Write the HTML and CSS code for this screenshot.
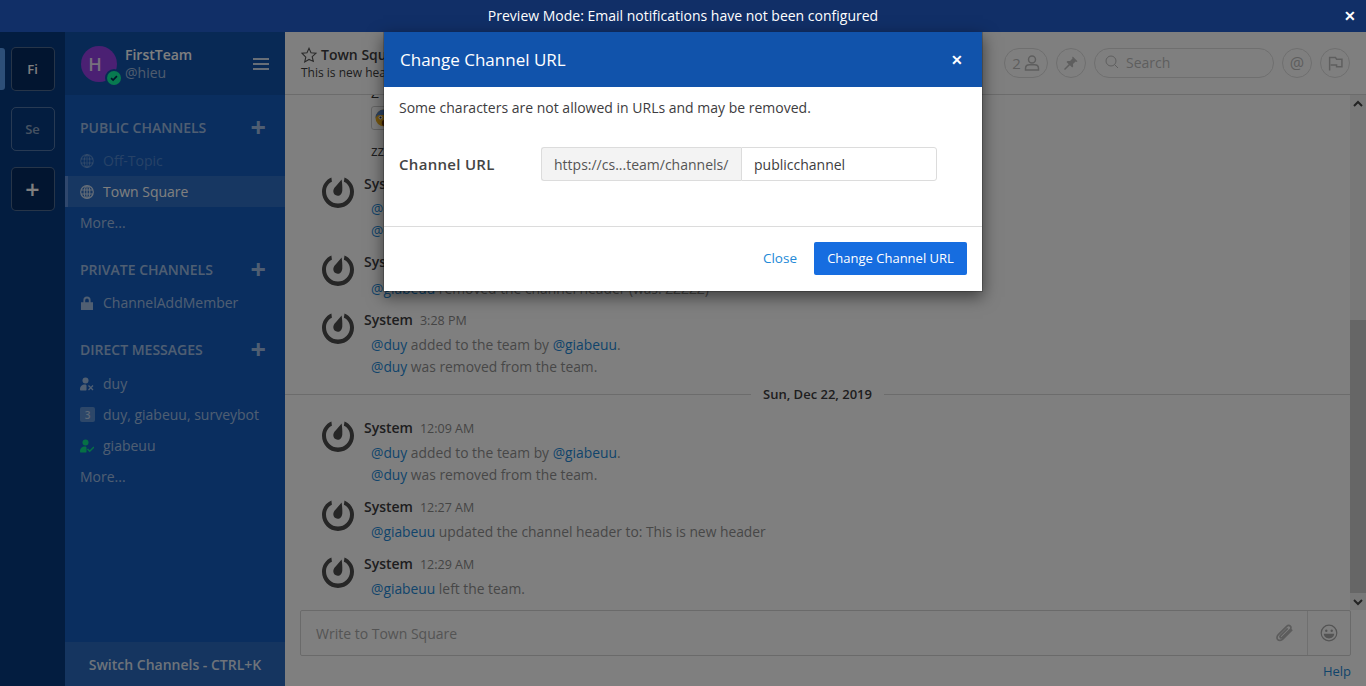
FILE: index.html
```html
<!DOCTYPE html>
<html lang="en">
<head>
  <meta charset="UTF-8" />
  <title>Town Square - FirstTeam</title>
  <link rel="stylesheet" href="styles.css">
</head>
<body>

  <!-- Announcement bar -->
  <div class="announcement">
    <span>Preview Mode: Email notifications have not been configured</span>
    <span class="announcement-close">&#10005;</span>
  </div>

  <div class="page">
    <!-- Team sidebar -->
    <div class="teams">
      <div class="team-row">
        <span class="team-marker"></span>
        <div class="team-btn team-active">Fi</div>
      </div>
      <div class="team-row"><div class="team-btn team-muted">Se</div></div>
      <div class="team-row"><div class="team-btn team-add">+</div></div>
    </div>

    <!-- Channel sidebar -->
    <div class="sidebar">
      <div class="sidebar-head">
        <div class="avatar">H
          <span class="avatar-status">
            <svg viewBox="0 0 12 12" width="10" height="10"><path d="M2.5 6.2l2.4 2.4 4.6-4.8" fill="none" stroke="#062a55" stroke-width="2"/></svg>
          </span>
        </div>
        <div class="head-names">
          <div class="head-team">FirstTeam</div>
          <div class="head-user">@hieu</div>
        </div>
        <div class="burger"><i></i><i></i><i></i></div>
      </div>

      <div class="sidebar-list">
        <div class="section-title">PUBLIC CHANNELS<span class="section-plus">+</span></div>
        <div class="channel channel-faded">
          <svg class="channel-icon" viewBox="0 0 14 14"><use href="#globe"/></svg>Off-Topic
        </div>
        <div class="channel channel-active">
          <svg class="channel-icon" viewBox="0 0 14 14"><use href="#globe"/></svg>Town Square
        </div>
        <div class="channel-more">More...</div>

        <div class="section-title section-gap">PRIVATE CHANNELS<span class="section-plus">+</span></div>
        <div class="channel">
          <svg class="channel-icon" viewBox="0 0 14 14"><path d="M1 6.2h12V14H1zM3.4 6.5V4.2a3.6 3.6 0 0 1 7.2 0v2.300h-1.800V4.300a1.800 1.800 0 0 0-3.600 0v2.200z" fill="currentColor"/></svg>ChannelAddMember
        </div>

        <div class="section-title section-gap section-dm">DIRECT MESSAGES<span class="section-plus">+</span></div>
        <div class="channel">
          <svg class="channel-icon" viewBox="0 0 14 14"><circle cx="5.500" cy="3.500" r="3" fill="currentColor"/><path d="M0 12.500C0 9 2 7.500 5 7.500c1 0 1.500.5 1.500 1.500v3.500c0 1-.5 1-1.500 1H1c-.7 0-1-.3-1-1z" fill="currentColor"/><path d="M8.500 8.500l4.500 4.500M13 8.500l-4.500 4.500" stroke="currentColor" stroke-width="1.300"/></svg>duy
        </div>
        <div class="channel">
          <span class="group-count">3</span>duy, giabeuu, surveybot
        </div>
        <div class="channel">
          <svg class="channel-icon icon-online" viewBox="0 0 14 14"><circle cx="5.500" cy="3.500" r="3" fill="currentColor"/><path d="M0 12.500C0 9 2 7.500 5 7.500c1 0 1.500.5 1.500 1.500v3.500c0 1-.5 1-1.500 1H1c-.7 0-1-.3-1-1z" fill="currentColor"/><path d="M7.500 10l2.200 2.200L14 8" fill="none" stroke="currentColor" stroke-width="1.500"/></svg>giabeuu
        </div>
        <div class="channel-more">More...</div>
      </div>

      <div class="switcher">Switch Channels - CTRL+K</div>
    </div>

    <!-- Center channel -->
    <div class="center">
      <div class="channel-header">
        <div class="header-info">
          <div class="header-name">
            <svg class="star" viewBox="0 0 16 16" width="16" height="16"><path d="M8 1.300l2 4.500 4.900.5-3.700 3.300 1.100 4.800L8 12.400l-4.300 2.500 1.100-4.800L1.100 6.300 6 5.800z" fill="none" stroke="#555" stroke-width="1.100"/></svg>
            Town Square
          </div>
          <div class="header-desc">This is new header</div>
        </div>
        <div class="header-tools">
          <div class="tool-pill tool-members">2
            <svg viewBox="0 0 16 16" width="16" height="16"><circle cx="8" cy="4.500" r="3.500" fill="none" stroke="currentColor" stroke-width="1.500"/><path d="M1.500 15v-1.500C1.500 11 3.500 9.800 5.500 9.800h5c2 0 4 1.200 4 3.700V15z" fill="none" stroke="currentColor" stroke-width="1.500"/></svg>
          </div>
          <div class="tool-round">
            <svg viewBox="0 0 16 16" width="16" height="16"><path d="M9.800 1.500l4.700 4.700-1 .7-.9-.3-2.600 2.500.2 2.500-1 1-2.300-2.300L2 15l-1-.9 4.700-4.900-2.200-2.300 1-1 2.500.2 2.500-2.600-.3-.9z" fill="currentColor"/></svg>
          </div>
          <div class="search-pill">
            <svg viewBox="0 0 14 14" width="14" height="14"><circle cx="6" cy="6" r="5" fill="none" stroke="currentColor" stroke-width="1"/><path d="M9.500 9.500l3.500 3.500" stroke="currentColor" stroke-width="1"/></svg>
            <span>Search</span>
          </div>
          <div class="tool-round tool-at">@</div>
          <div class="tool-round tool-flag">
            <svg viewBox="0 0 14 14" width="15" height="15"><path d="M1.500 13.500V1.500H7L8 3h5v7H8V8.500H2.500" fill="none" stroke="currentColor" stroke-width="1.400"/></svg>
          </div>
        </div>
      </div>

      <div class="post-area">
        <div class="posts">
          <div class="old-lines">
            <div class="old-z">Z</div>
            <div class="old-thumb">
              <svg viewBox="0 0 18 18" width="18" height="18"><circle cx="9" cy="9" r="8.500" fill="#f0b020"/><path d="M.5 9a8.500 8.500 0 0 1 17 0c-1-2-3-3-3-3H3.500S1.500 7 .5 9z" fill="#5a86c8"/><circle cx="5.500" cy="8.500" r="2" fill="#fff"/><circle cx="12.500" cy="8.500" r="2" fill="#fff"/><circle cx="5.500" cy="8.500" r="1" fill="#333"/><circle cx="12.500" cy="8.500" r="1" fill="#333"/><ellipse cx="9" cy="14" rx="2.200" ry="3" fill="#7a3a10"/></svg>
            </div>
            <div class="old-zz">zzzzz</div>
          </div>

          <div class="post post-first">
            <svg class="post-logo" viewBox="0 0 32 32"><use href="#mm-logo"/></svg>
            <div class="post-body">
              <div class="post-meta"><b>System</b><time>3:28 PM</time></div>
              <p><a>@duy</a> added to the team by <a>@giabeuu</a>.</p>
              <p><a>@duy</a> was removed from the team.</p>
            </div>
          </div>
          <div class="post post-tall">
            <svg class="post-logo" viewBox="0 0 32 32"><use href="#mm-logo"/></svg>
            <div class="post-body">
              <div class="post-meta"><b>System</b><time>3:28 PM</time></div>
              <p><a>@giabeuu</a> removed the channel header (was: ZZZZZ)</p>
            </div>
          </div>
          <div class="post">
            <svg class="post-logo" viewBox="0 0 32 32"><use href="#mm-logo"/></svg>
            <div class="post-body">
              <div class="post-meta"><b>System</b><time>3:28 PM</time></div>
              <p><a>@duy</a> added to the team by <a>@giabeuu</a>.</p>
              <p><a>@duy</a> was removed from the team.</p>
            </div>
          </div>

          <div class="date-line"><span>Sun, Dec 22, 2019</span></div>

          <div class="post">
            <svg class="post-logo" viewBox="0 0 32 32"><use href="#mm-logo"/></svg>
            <div class="post-body">
              <div class="post-meta"><b>System</b><time>12:09 AM</time></div>
              <p><a>@duy</a> added to the team by <a>@giabeuu</a>.</p>
              <p><a>@duy</a> was removed from the team.</p>
            </div>
          </div>
          <div class="post">
            <svg class="post-logo" viewBox="0 0 32 32"><use href="#mm-logo"/></svg>
            <div class="post-body">
              <div class="post-meta"><b>System</b><time>12:27 AM</time></div>
              <p><a>@giabeuu</a> updated the channel header to: This is new header</p>
            </div>
          </div>
          <div class="post">
            <svg class="post-logo" viewBox="0 0 32 32"><use href="#mm-logo"/></svg>
            <div class="post-body">
              <div class="post-meta"><b>System</b><time>12:29 AM</time></div>
              <p><a>@giabeuu</a> left the team.</p>
            </div>
          </div>
        </div>

        <div class="scrollbar">
          <div class="scroll-btn">
            <svg viewBox="0 0 10 8" width="10" height="8"><path d="M1 6l4-4 4 4" fill="none" stroke="#444" stroke-width="2"/></svg>
          </div>
          <div class="scroll-track"><div class="scroll-thumb"></div></div>
          <div class="scroll-btn">
            <svg viewBox="0 0 10 8" width="10" height="8"><path d="M1 2l4 4 4-4" fill="none" stroke="#444" stroke-width="2"/></svg>
          </div>
        </div>
      </div>

      <div class="composer">
        <div class="composer-box">
          <div class="composer-input">Write to Town Square</div>
          <svg class="clip" viewBox="0 0 18 18" width="20" height="20"><path d="M15.500 6L7 14.500c-1.500 1.500-3.500 1.500-4.500.5s-1-3 .5-4.500L10.500 3c1-1 2.500-1 3.300-.2s.8 2.200-.2 3.200L6.500 13c-.5.500-1.300.5-1.700.1s-.4-1.200.1-1.700l6.500-6.500" fill="none" stroke="currentColor" stroke-width="1.500"/></svg>
          <div class="composer-emoji">
            <svg viewBox="0 0 18 18" width="18" height="18"><circle cx="9" cy="9" r="7.800" fill="none" stroke="currentColor" stroke-width="1.200"/><circle cx="6.300" cy="6.800" r="1.200" fill="currentColor"/><circle cx="11.700" cy="6.800" r="1.200" fill="currentColor"/><path d="M3.800 9.800h10.400c0 2.600-2.300 4.700-5.200 4.700s-5.200-2.100-5.200-4.700z" fill="currentColor"/></svg>
          </div>
        </div>
        <div class="composer-help"><a>Help</a></div>
      </div>
    </div>

    <!-- Dimmed backdrop and modal -->
    <div class="backdrop">
      <div class="modal">
        <div class="modal-head">
          <span>Change Channel URL</span>
          <span class="modal-x">&#10005;</span>
        </div>
        <div class="modal-body">
          <p class="modal-note">Some characters are not allowed in URLs and may be removed.</p>
          <div class="url-row">
            <label class="url-label">Channel URL</label>
            <div class="url-group">
              <span class="url-addon">https://cs...team/channels/</span>
              <input class="url-input" type="text" value="publicchannel" />
            </div>
          </div>
        </div>
        <div class="modal-foot">
          <a class="modal-close">Close</a>
          <button class="modal-save" type="button">Change Channel URL</button>
        </div>
      </div>
    </div>
  </div>

  <!-- Shared icons -->
  <svg class="icon-defs" width="0" height="0">
    <symbol id="globe" viewBox="0 0 14 14">
      <circle cx="7" cy="7" r="6.300" fill="none" stroke="currentColor" stroke-width="1.200"/>
      <ellipse cx="7" cy="7" rx="2.800" ry="6.300" fill="none" stroke="currentColor" stroke-width="1.100"/>
      <path d="M1 5h12M1 9h12M7 1v12" stroke="currentColor" stroke-width="1.100"/>
    </symbol>
    <symbol id="mm-logo" viewBox="0 0 32 32">
      <path fill="#4c4c4c" d="M22.500 1.500l-.6 4.300C26.300 7.900 28 11.500 28 15.500 28 22.300 22.600 27.600 16 27.600S4 22.300 4 15.500c0-4 1.700-7.600 5.900-9.700L9.400 1.500C3.700 3.900 0 9.400 0 15.800 0 24.700 7.200 32 16 32s16-7.300 16-16.200c0-6.400-3.800-11.900-9.500-14.300z"/>
      <path fill="#4c4c4c" d="M19.600 3.600c.5 3 .9 7 .7 10.800-.2 3-2 5.300-4.600 5.300-2.500 0-4.400-1.900-4.400-4.400 0-1.900.9-3.200 2.300-4.700 1.700-1.900 3.800-4.400 6-7z"/>
    </symbol>
  </svg>

</body>
</html>
```

FILE: styles.css
```css
* {
  box-sizing: border-box;
}

html, body {
  height: 100%;
}

body {
  margin: 0;
  overflow: hidden;
  display: flex;
  flex-direction: column;
  background-color: #fff;
  color: #3d3c40;
  font-family: 'Open Sans', 'Noto Sans', sans-serif;
  font-size: 14px;
}

.icon-defs {
  position: absolute;
}

/* Announcement bar */
.announcement {
  flex: 0 0 32px;
  position: relative;
  display: flex;
  align-items: center;
  justify-content: center;
  padding-bottom: 2px;
  background-color: #112f67;
  color: #fff;
}

.announcement-close {
  position: absolute;
  right: 10px;
  top: 6px;
  font-size: 14px;
  font-weight: bold;
}

/* Page */
.page {
  flex: 1;
  min-height: 0;
  position: relative;
  display: flex;
}

/* Team sidebar */
.teams {
  flex: 0 0 65px;
  display: flex;
  flex-direction: column;
  padding-top: 15px;
  gap: 16px;
  background-color: #063a80;
}

.team-row {
  position: relative;
  display: flex;
  justify-content: center;
}

.team-marker {
  position: absolute;
  left: 0;
  top: 1px;
  width: 5px;
  height: 42px;
  border-radius: 0 3px 3px 0;
  background-color: #5a9ef0;
}

.team-btn {
  width: 44px;
  height: 44px;
  display: flex;
  align-items: center;
  justify-content: center;
  border: 1px solid rgba(255, 255, 255, 0.3);
  border-radius: 5px;
  font-weight: 600;
  font-size: 13px;
  color: #fff;
}

.team-active, .team-add {
  background-color: #042a60;
}

.team-muted {
  color: rgba(255, 255, 255, 0.55);
}

.team-add {
  font-size: 25px;
}

/* Channel sidebar */
.sidebar {
  flex: 0 0 220px;
  display: flex;
  flex-direction: column;
  background-color: #145dbf;
  color: rgba(255, 255, 255, 0.6);
}

.sidebar-head {
  flex: 0 0 63px;
  display: flex;
  align-items: center;
  padding: 0 16px;
  background-color: #1153ab;
}

.avatar {
  position: relative;
  flex: 0 0 36px;
  height: 36px;
  margin-right: 8px;
  padding-right: 8px;
  display: flex;
  align-items: center;
  justify-content: center;
  border-radius: 50%;
  background-color: #9640e6;
  color: rgba(255, 255, 255, 0.85);
  font-size: 18px;
  font-weight: 600;
}

.avatar-status {
  position: absolute;
  right: -4px;
  bottom: -3px;
  width: 14px;
  height: 14px;
  display: flex;
  align-items: center;
  justify-content: center;
  border-radius: 50%;
  background-color: #10f4a0;
  box-shadow: 0 0 0 2px #1153ab;
}

.head-names {
  flex: 1;
  line-height: 18px;
}

.head-team {
  color: #fff;
  font-weight: 600;
}

.burger {
  width: 16px;
  display: flex;
  flex-direction: column;
  gap: 3px;
}

.burger i {
  display: block;
  height: 2px;
  background-color: #fff;
  opacity: 0.8;
}

.sidebar-list {
  flex: 1;
  padding-top: 21px;
}

.section-title {
  display: flex;
  align-items: center;
  justify-content: space-between;
  height: 22px;
  padding: 0 19px 0 15px;
  font-weight: 600;
  font-size: 14px;
  color: rgba(255, 255, 255, 0.6);
}

.section-plus {
  font-size: 27px;
  font-weight: 700;
  line-height: 22px;
}

.section-gap {
  margin-top: 20px;
}

.channel, .channel-more {
  height: 31px;
  display: flex;
  align-items: center;
  padding-left: 15px;
}

.section-title + .channel {
  margin-top: 7px;
}

.section-dm + .channel {
  margin-top: 8px;
}

.channel-icon {
  width: 14px;
  height: 14px;
  margin-right: 9px;
  color: rgba(255, 255, 255, 0.6);
}

.channel-faded {
  color: rgba(255, 255, 255, 0.25);
}

.channel-faded .channel-icon {
  color: rgba(255, 255, 255, 0.25);
}

.channel-active {
  padding-left: 12px;
  border-left: 3px solid #5f8fdb;
  background-color: #2f6fc4;
  color: #fff;
}

.channel-active .channel-icon {
  color: #fff;
  opacity: 0.75;
}

.icon-online {
  color: #0ce08a;
}

.group-count {
  width: 15px;
  height: 15px;
  margin-right: 8px;
  display: flex;
  align-items: center;
  justify-content: center;
  border-radius: 2px;
  background-color: rgba(255, 255, 255, 0.3);
  font-size: 10px;
  font-weight: 600;
}

.switcher {
  flex: 0 0 44px;
  display: flex;
  align-items: center;
  justify-content: center;
  background-color: #2a6bc0;
  color: rgba(255, 255, 255, 0.85);
  font-weight: 600;
}

/* Center channel */
.center {
  flex: 1;
  min-width: 0;
  display: flex;
  flex-direction: column;
  background-color: #fff;
}

.channel-header {
  flex: 0 0 63px;
  display: flex;
  align-items: center;
  justify-content: space-between;
  padding: 0 16px;
  border-bottom: 1px solid #d9d9d9;
}

.header-name {
  display: flex;
  align-items: center;
  gap: 4px;
  font-weight: 600;
  line-height: 20px;
}

.header-desc {
  font-size: 12px;
  line-height: 16px;
}

.header-tools {
  display: flex;
  align-items: center;
  gap: 8px;
  color: #bdbdbd;
}

.tool-pill, .tool-round, .search-pill {
  height: 30px;
  display: flex;
  align-items: center;
  justify-content: center;
  border: 1px solid #dedede;
  border-radius: 15px;
}

.tool-members {
  width: 44px;
  gap: 3px;
  font-size: 15px;
}

.tool-round {
  width: 30px;
}

.tool-at {
  font-size: 16px;
}

.search-pill {
  width: 180px;
  justify-content: flex-start;
  gap: 7px;
  padding: 0 0 2px 10px;
}

.post-area {
  flex: 1;
  min-height: 0;
  display: flex;
}

.posts {
  flex: 1;
  min-width: 0;
  overflow: hidden;
  display: flex;
  flex-direction: column;
  justify-content: flex-end;
  padding-bottom: 5px;
}

.old-lines {
  padding-left: 86px;
}

.old-z {
  height: 20px;
  line-height: 14px;
  color: #333;
}

.old-thumb {
  width: 26px;
  height: 24px;
  display: flex;
  align-items: center;
  padding-left: 3px;
  border: 1px solid #ccc;
  border-radius: 3px;
}

.old-zz {
  margin-top: 11px;
  height: 20px;
  line-height: 20px;
}

.post {
  display: flex;
  padding: 5px 0 5px 37px;
}

.post-first {
  margin-top: 7px;
}

.post-tall {
  padding-top: 4px;
  padding-bottom: 4px;
}

.post-tall .post-meta {
  height: 27px;
}

.post-logo {
  flex: 0 0 32px;
  height: 32px;
  margin-top: 3px;
  margin-right: 10px;
}

.post-meta {
  height: 25px;
  line-height: 22px;
}

.post-meta b {
  font-weight: 600;
}

.post-meta time {
  margin-left: 7px;
  font-size: 12.5px;
  color: #8a8a8a;
}

.post p {
  margin: 0 0 0 7px;
  height: 22px;
  line-height: 22px;
  font-size: 13.83px;
  color: #8f8f8f;
}

.post p a {
  color: #2389d7;
}

.date-line {
  display: flex;
  align-items: center;
  gap: 12px;
  height: 24px;
  margin: 2px 0 9px;
  font-size: 13px;
  font-weight: 600;
}

.date-line::before, .date-line::after {
  content: '';
  flex: 1;
  height: 1px;
  background-color: #d9d9d9;
}

.scrollbar {
  flex: 0 0 16px;
  display: flex;
  flex-direction: column;
  background-color: #f1f1f1;
}

.scroll-btn {
  flex: 0 0 17px;
  display: flex;
  align-items: center;
  justify-content: center;
}

.scroll-track {
  flex: 1;
  display: flex;
  flex-direction: column;
  justify-content: flex-end;
}

.scroll-thumb {
  height: 273px;
  background-color: #cccccc;
}

.composer {
  flex: 0 0 76px;
  padding: 0 15px 0 15px;
}

.composer-box {
  height: 46px;
  display: flex;
  align-items: center;
  border: 1px solid #d5d5d5;
  border-radius: 2px;
  color: #a9a9a9;
}

.composer-input {
  flex: 1;
  padding-left: 15px;
}

.clip {
  margin-right: 12px;
  color: #b8b8b8;
}

.composer-emoji {
  width: 43px;
  height: 100%;
  display: flex;
  align-items: center;
  justify-content: center;
  border-left: 1px solid #e0e0e0;
}

.composer-help {
  margin-top: 6px;
  text-align: right;
  color: #2389d7;
  font-size: 13px;
}

/* Backdrop and modal */
.backdrop {
  position: absolute;
  inset: 0;
  display: flex;
  justify-content: center;
  background-color: rgba(0, 0, 0, 0.5);
}

.modal {
  width: 600px;
  height: 260px;
  display: flex;
  flex-direction: column;
  border: 1px solid rgba(0, 0, 0, 0.2);
  border-top: 0;
  background-color: #fff;
  background-clip: padding-box;
  box-shadow: 0 5px 15px rgba(0, 0, 0, 0.5);
}

.modal-head {
  flex: 0 0 55px;
  display: flex;
  align-items: center;
  justify-content: space-between;
  padding: 0 19px 0 16px;
  background-color: #1153ab;
  color: #fff;
  font-size: 17px;
}

.modal-x {
  font-size: 14px;
  font-weight: bold;
}

.modal-body {
  flex: 1;
  padding: 11px 15px 10px;
  border-bottom: 1px solid #dcdcdc;
}

.modal-note {
  margin: 0;
  line-height: 20px;
}

.url-row {
  display: flex;
  align-items: center;
  margin-top: 29px;
}

.url-label {
  flex: 0 0 142px;
  font-size: 15px;
  font-weight: 600;
  letter-spacing: 0.3px;
  color: #444;
}

.url-group {
  display: flex;
  width: 396px;
  height: 34px;
}

.url-addon {
  flex: 0 0 200px;
  padding-left: 12px;
  line-height: 33px;
  border: 1px solid #dcdcdc;
  border-right: 0;
  border-radius: 3px 0 0 3px;
  background-color: #f3f3f3;
  color: #555;
  white-space: nowrap;
}

.url-input {
  flex: 1;
  min-width: 0;
  padding: 0 12px;
  border: 1px solid #dcdcdc;
  border-radius: 0 3px 3px 0;
  font-family: inherit;
  font-size: 14px;
  color: #3d3c40;
}

.modal-foot {
  flex: 0 0 64px;
  display: flex;
  align-items: center;
  justify-content: flex-end;
  gap: 17px;
  padding: 0 15px 2px;
}

.modal-close {
  font-size: 13.5px;
  color: #2389d7;
}

.modal-save {
  width: 153px;
  height: 33px;
  padding: 0;
  border: none;
  border-radius: 2px;
  background-color: #166de0;
  color: #fff;
  font-family: inherit;
  font-size: 13px;
}
```
